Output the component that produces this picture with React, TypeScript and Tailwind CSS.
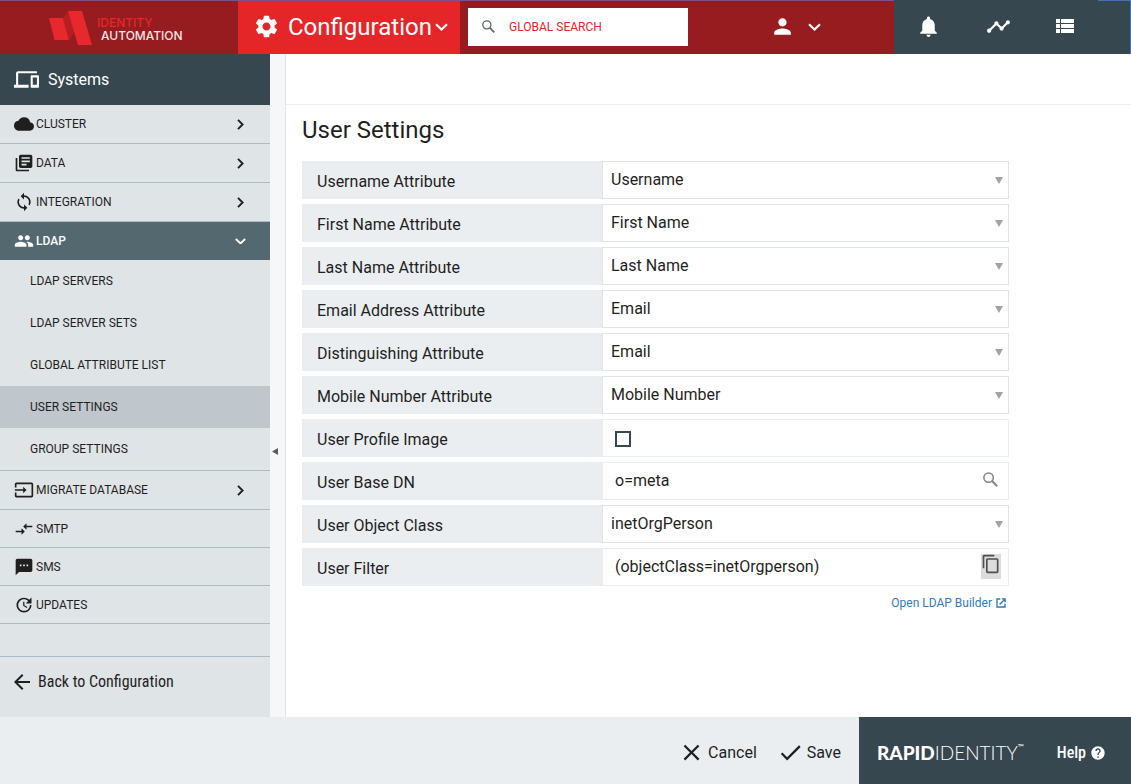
import { useState, type ReactNode } from "react";
import {
  MdSettings,
  MdPerson,
  MdNotifications,
  MdTimeline,
  MdDevices,
  MdCloud,
  MdLibraryBooks,
  MdLoop,
  MdPeople,
  MdInput,
  MdCompareArrows,
  MdSms,
  MdUpdate,
  MdArrowBack,
  MdClose,
  MdCheck,
  MdHelp,
  MdContentCopy,
} from "react-icons/md";

function ChevronDown({ width }: { width: number }) {
  return (
    <svg width={width} viewBox="0 0 13 8" fill="none" stroke="currentColor" strokeWidth="2.2" className="shrink-0" aria-hidden="true">
      <path d="M1 1.2L6.5 6.5L12 1.2" />
    </svg>
  );
}

function ChevronRight() {
  return (
    <svg width="7" height="11" viewBox="0 0 7 11" fill="none" stroke="currentColor" strokeWidth="1.9" className="mr-[6px]" aria-hidden="true">
      <path d="M1 0.9L5.6 5.5L1 10.1" />
    </svg>
  );
}

function SearchGlyph({ size }: { size: number }) {
  return (
    <svg width={size} height={size} viewBox="0 0 15 15" fill="none" stroke="currentColor" className="shrink-0" aria-hidden="true">
      <circle cx="5.6" cy="5.6" r="4.7" strokeWidth="1.5" />
      <path d="M8.8 8.8L14.2 14.2" strokeWidth="2" />
    </svg>
  );
}

function ListGlyph() {
  return (
    <svg width="18" height="14" viewBox="0 0 18 14" fill="currentColor" aria-hidden="true">
      <path d="M0 0H4V4H0ZM5 0H18V4H5ZM0 5H4V9H0ZM5 5H18V9H5ZM0 10H4V14H0ZM5 10H18V14H5Z" />
    </svg>
  );
}

function LaunchGlyph() {
  return (
    <svg width="10" height="10" viewBox="0 0 10 10" fill="none" stroke="currentColor" strokeWidth="1.4" aria-hidden="true">
      <path d="M4.2 1H1V9H9V5.8M5.8 0.9H9.1V4.2M9 1L3.6 6.4" />
    </svg>
  );
}

function BrandLogo() {
  return (
    <a href="#home" aria-label="Identity Automation" className="flex items-center gap-[5px] pl-[49px]">
      <svg width="43" height="34" viewBox="0 0 43 34" aria-hidden="true">
        <path d="M0 7L14 7L20 29L5.5 29Z" fill="#e8282c" />
        <path d="M14 7L19 0L26 20L20 29Z" fill="#b51f24" />
        <path d="M19 0L33 0L43 34L29 34Z" fill="#e8282c" />
      </svg>
      <span className="flex flex-col pt-[2px] font-[Inter,sans-serif] text-xs leading-[13px] font-medium">
        <span className="text-[#e5262a]">IDENTITY</span>
        <span className="pl-1 text-[#f3e4e4]">AUTOMATION</span>
      </span>
    </a>
  );
}

function Header() {
  return (
    <header className="flex h-[54px] bg-[#36474f] text-white">
      <div className="flex flex-1 border-t border-[#7d528c] bg-[#971c1f]">
        <div className="flex w-[238px] shrink-0 items-center">
          <BrandLogo />
        </div>
        <button type="button" className="flex w-[222px] shrink-0 items-center bg-[#e52629] pb-[2px] pl-[15px]">
          <MdSettings size={27} aria-hidden="true" />
          <span className="ml-2 mr-[3px] text-2xl">Configuration</span>
          <ChevronDown width={13} />
        </button>
        <label className="ml-2 mt-[7px] flex h-[38px] w-[220px] shrink-0 items-center gap-[14px] bg-white pl-[14px]">
          <span className="pb-[2px] text-[#5d6468]"><SearchGlyph size={13} /></span>
          <input
            type="search"
            aria-label="Global search"
            placeholder="GLOBAL SEARCH"
            className="w-full min-w-0 bg-transparent text-xs text-[#e52629] outline-none placeholder:text-[#e52629]"
          />
        </label>
        <button type="button" aria-label="Account" className="ml-auto mr-[73px] flex items-center gap-[13px] pb-[2px]">
          <MdPerson size={25} />
          <ChevronDown width={13} />
        </button>
      </div>
      <nav aria-label="Shortcuts" className="flex w-[204px] items-center justify-between pb-[2px] pl-[22px] pr-6">
        <button type="button" aria-label="Notifications"><MdNotifications size={25} /></button>
        <button type="button" aria-label="Activity"><MdTimeline size={25} /></button>
        <button type="button" aria-label="List"><ListGlyph /></button>
      </nav>
      <div className="w-[33px] border-t border-r border-[#4272b0]" />
    </header>
  );
}

type NavRowProps = { icon: ReactNode; label: string; expandable?: boolean };

function NavRow({ icon, label, expandable }: NavRowProps) {
  return (
    <li className="border-b border-[#adbcc4]">
      <a href={"#" + label.toLowerCase()} className={expandable ? "flex h-[38px] items-center pl-[14px] pr-5" : "flex h-[37px] items-center pl-[14px] pr-5"}>
        <span className="flex w-[22px] items-center">{icon}</span>
        <span className="flex-1">{label}</span>
        {expandable && <ChevronRight />}
      </a>
    </li>
  );
}

const ldapPages = ["LDAP SERVERS", "LDAP SERVER SETS", "GLOBAL ATTRIBUTE LIST", "USER SETTINGS", "GROUP SETTINGS"];

function Sidebar() {
  return (
    <aside className="flex w-[270px] shrink-0 flex-col bg-[#dfe4e6] text-xs text-[#1f1f1f]">
      <h2 className="flex h-[51px] items-center gap-[9px] bg-[#36474f] pl-[14px] text-base text-white">
        <MdDevices size={25} aria-hidden="true" />
        Systems
      </h2>
      <ul>
        <NavRow icon={<MdCloud size={20} />} label="CLUSTER" expandable />
        <NavRow icon={<MdLibraryBooks size={20} />} label="DATA" expandable />
        <NavRow icon={<MdLoop size={20} />} label="INTEGRATION" expandable />
        <li className="border-b border-[#adbcc4]">
          <button type="button" aria-expanded="true" className="flex h-[38px] w-full items-center bg-[#53696f] pl-[14px] pr-6 text-left font-medium text-white">
            <span className="flex w-[22px]"><MdPeople size={20} /></span>
            <span className="flex-1">LDAP</span>
            <ChevronDown width={11} />
          </button>
          <ul>
            {ldapPages.map((page) => (
              <li key={page}>
                <a
                  href={"#" + page.toLowerCase().replaceAll(" ", "-")}
                  className={page === "USER SETTINGS" ? "flex h-[42px] items-center bg-[#bfc6cc] pl-[30px]" : "flex h-[42px] items-center pl-[30px]"}
                >
                  {page}
                </a>
              </li>
            ))}
          </ul>
        </li>
        <NavRow icon={<MdInput size={20} />} label="MIGRATE DATABASE" expandable />
        <NavRow icon={<MdCompareArrows size={20} />} label="SMTP" />
        <NavRow icon={<MdSms size={20} />} label="SMS" />
        <NavRow icon={<MdUpdate size={20} />} label="UPDATES" />
      </ul>
      <a href="#configuration" className="mt-8 flex items-center gap-1 border-t border-[#adbcc4] pl-[10px] pt-[13px] font-['Roboto_Condensed',Roboto,sans-serif] text-base">
        <MdArrowBack size={24} aria-hidden="true" />
        Back to Configuration
      </a>
    </aside>
  );
}

function FieldRow({ id, label, children }: { id: string; label: string; children: ReactNode }) {
  return (
    <div className="flex h-[38px] bg-[#eaeef1]">
      <label htmlFor={id} className="flex w-[300px] shrink-0 items-center pl-[15px] pt-[3px]">{label}</label>
      {children}
    </div>
  );
}

function SelectRow({ id, label, value }: { id: string; label: string; value: string }) {
  return (
    <FieldRow id={id} label={label}>
      <div className="relative flex flex-1">
        <select id={id} defaultValue={value} className="w-full appearance-none border border-[#dde3e6] bg-white pl-2 pr-6 outline-none">
          <option>{value}</option>
        </select>
        <svg width="8" height="7" viewBox="0 0 8 7" className="pointer-events-none absolute right-[6px] top-4" aria-hidden="true">
          <path d="M0 0H8L4 7Z" fill="#a3a3a3" />
        </svg>
      </div>
    </FieldRow>
  );
}

const attributeFields = [
  { id: "username", label: "Username Attribute", value: "Username" },
  { id: "first-name", label: "First Name Attribute", value: "First Name" },
  { id: "last-name", label: "Last Name Attribute", value: "Last Name" },
  { id: "email", label: "Email Address Attribute", value: "Email" },
  { id: "distinguishing", label: "Distinguishing Attribute", value: "Email" },
  { id: "mobile", label: "Mobile Number Attribute", value: "Mobile Number" },
];

function UserSettings() {
  const [showImage, setShowImage] = useState(false);
  return (
    <main className="flex-1 bg-white text-[#1f1f1f]">
      <div className="h-[51px] border-b border-[#eaeef1]" />
      <form id="user-settings" className="max-w-[723px] pl-4 pt-2" onSubmit={(e) => e.preventDefault()}>
        <h1 className="text-2xl leading-[34px]">User Settings</h1>
        <div className="mt-[14px] flex flex-col gap-[5px]">
          {attributeFields.map((field) => (
            <SelectRow key={field.id} {...field} />
          ))}
          <FieldRow id="profile-image" label="User Profile Image">
            <div className="flex flex-1 items-center border border-[#eaeef1] bg-white pl-3 pt-[2px]">
              <input
                id="profile-image"
                type="checkbox"
                checked={showImage}
                onChange={(e) => setShowImage(e.target.checked)}
                className="size-4 appearance-none border-2 border-[#36474f] bg-white checked:bg-[#36474f]"
              />
            </div>
          </FieldRow>
          <FieldRow id="base-dn" label="User Base DN">
            <div className="flex flex-1 items-center border border-[#eaeef1] bg-white pb-[2px] pl-3 pr-[10px]">
              <input id="base-dn" defaultValue="o=meta" className="h-full min-w-0 flex-1 bg-transparent outline-none" />
              <button type="button" aria-label="Browse base DN" className="pb-[2px] text-[#858585]"><SearchGlyph size={15} /></button>
            </div>
          </FieldRow>
          <SelectRow id="object-class" label="User Object Class" value="inetOrgPerson" />
          <FieldRow id="user-filter" label="User Filter">
            <div className="flex flex-1 items-center border border-[#eaeef1] bg-white pb-[2px] pl-3 pr-[7px]">
              <input id="user-filter" defaultValue="(objectClass=inetOrgperson)" className="h-full min-w-0 flex-1 bg-transparent outline-none" />
              <button type="button" aria-label="Copy filter" className="flex h-[25px] w-5 justify-center bg-[#dcdcdc] text-[#4f4f4f]"><MdContentCopy size={20} /></button>
            </div>
          </FieldRow>
        </div>
        <div className="mt-2 flex justify-end pr-[3px] text-xs leading-[18px] text-[#337ab7]">
          <a href="#ldap-builder" className="flex items-center gap-1">
            Open LDAP Builder
            <LaunchGlyph />
          </a>
        </div>
      </form>
    </main>
  );
}

function Footer() {
  return (
    <footer className="flex h-[67px] bg-[#eaeef1] text-[#1f1f1f]">
      <div className="flex flex-1 items-center justify-end gap-5 pr-[18px] pt-1">
        <button type="button" className="flex items-center gap-[3px]"><MdClose size={27} aria-hidden="true" />Cancel</button>
        <button type="submit" form="user-settings" className="flex items-center gap-[3px]"><MdCheck size={27} aria-hidden="true" />Save</button>
      </div>
      <div className="flex w-[272px] items-center justify-between bg-[#36474f] pl-[18px] pr-[25px] pt-[5px] text-white">
        <p className="flex items-start font-[Lato,sans-serif] text-[19px]">
          <span className="font-black">RAPID</span>
          <span className="font-light">IDENTITY</span>
          <span className="text-[8px] leading-4">™</span>
        </p>
        <a href="#help" className="flex items-center gap-1 font-['Roboto_Condensed',Roboto,sans-serif] font-medium">
          Help
          <MdHelp size={16} aria-hidden="true" />
        </a>
      </div>
    </footer>
  );
}

export default function App() {
  return (
    <div className="flex min-h-screen flex-col font-[Roboto,sans-serif]">
      <Header />
      <div className="flex flex-1">
        <Sidebar />
        <button type="button" aria-label="Collapse sidebar" className="flex w-4 shrink-0 items-center border-r border-[#dfe3e8] bg-[#f5f7f9] pl-[2px] pt-[132px]">
          <svg width="6" height="7" viewBox="0 0 6 7" aria-hidden="true"><path d="M6 0V7L0 3.5Z" fill="#5c5c5c" /></svg>
        </button>
        <UserSettings />
      </div>
      <Footer />
    </div>
  );
}
